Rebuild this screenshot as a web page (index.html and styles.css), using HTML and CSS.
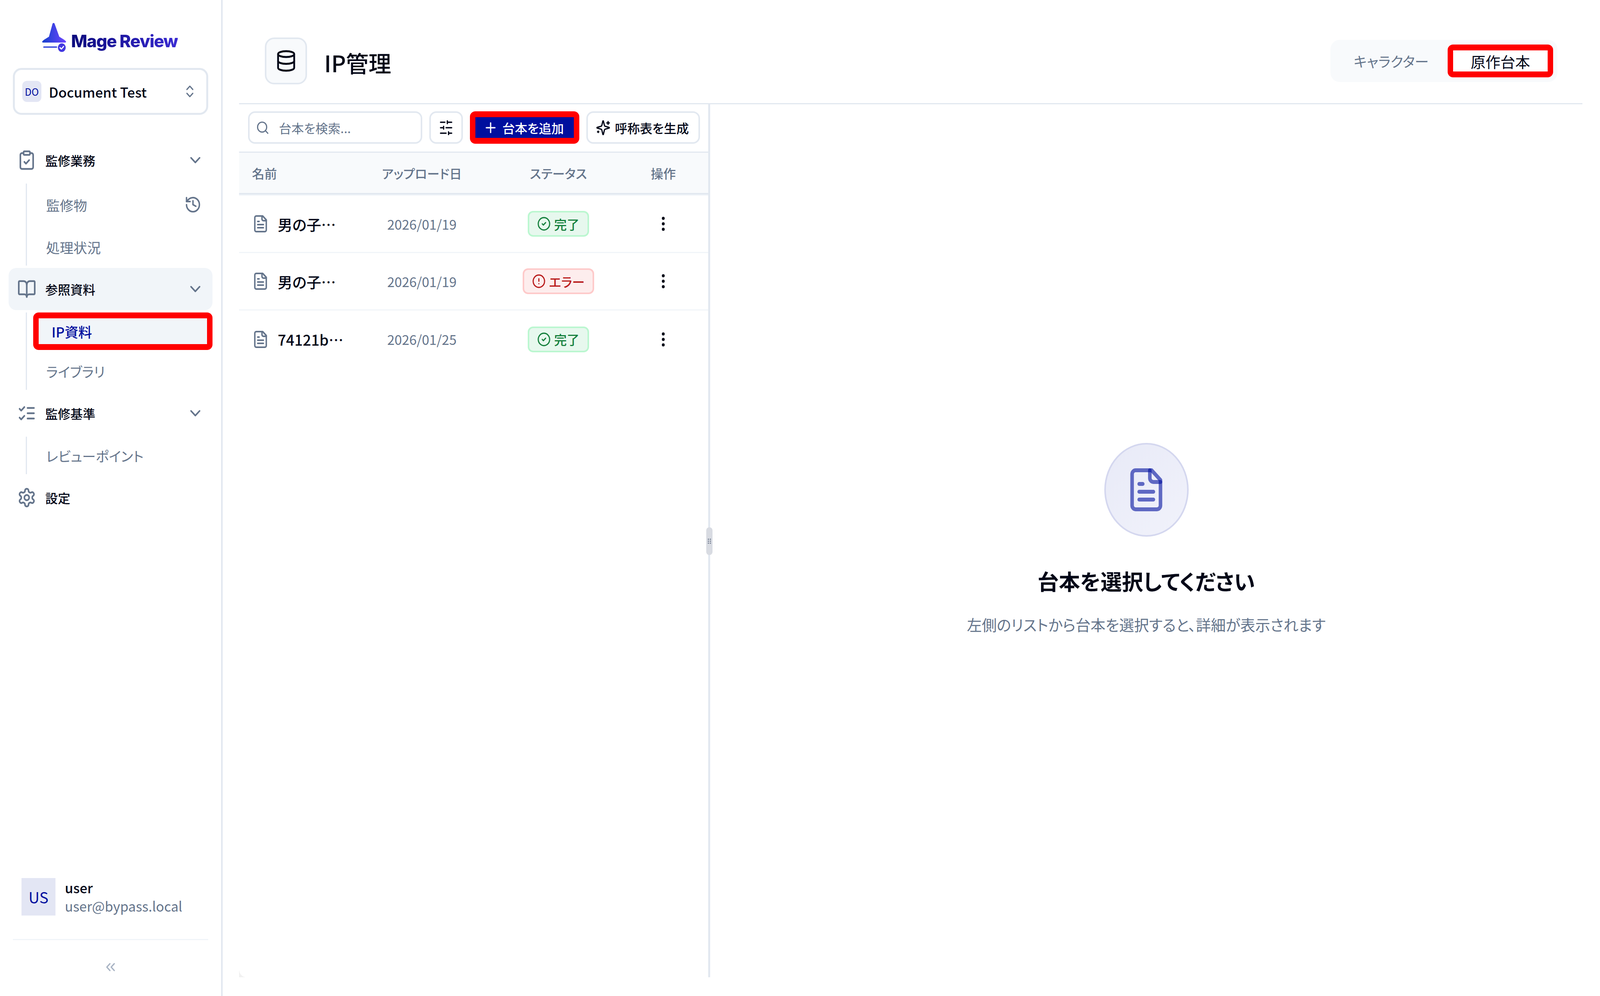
FILE: index.html
```html
<!DOCTYPE html>
<html lang="ja">
  <head>
    <meta charset="UTF-8" />
    <title>Mage Review</title>
    <link rel="stylesheet" href="styles.css">
  </head>
  <body>
    <div class="app">
      <aside class="sidebar">
        <div class="logo">
          <svg class="logo-mark" viewBox="0 0 70 80" preserveAspectRatio="none" aria-hidden="true">
            <defs>
              <linearGradient id="hat" x1="0" y1="0" x2="1" y2="0">
                <stop offset="0" stop-color="#1440cc" />
                <stop offset="1" stop-color="#6e45ff" />
              </linearGradient>
            </defs>
            <path fill="url(#hat)" d="M30 5c1-3 5-3 6 0l13 33 14 8c3 2 5 4 5 5s-1 2-3 2H4c-2 0-3-1-3-2s2-3 5-5l14-8z" />
            <rect x="4" y="63" width="39" height="3" rx="1.5" fill="#2236d8" />
            <circle cx="56" cy="66" r="11" fill="#4338e0" />
            <path d="m51 66 4 3.500 6-6.500" fill="none" stroke="#fff" stroke-width="3" stroke-linecap="round" stroke-linejoin="round" />
          </svg>
          <span class="logo-text">Mage Review</span>
        </div>

        <div class="workspace">
          <span class="workspace-avatar">DO</span>
          <span class="workspace-name">Document Test</span>
          <svg class="icon-updown" viewBox="0 0 24 24" preserveAspectRatio="none"><path d="m7 15 5 5 5-5" /><path d="m7 9 5-5 5 5" /></svg>
        </div>

        <nav class="nav">
          <div class="nav-group">
            <svg class="nav-icon" viewBox="0 0 24 24" preserveAspectRatio="none"><rect x="8" y="2" width="8" height="4" rx="1" ry="1" /><path d="M16 4h2a2 2 0 0 1 2 2v14a2 2 0 0 1-2 2H6a2 2 0 0 1-2-2V6a2 2 0 0 1 2-2h2" /><path d="m9 14 2 2 4-4" /></svg>
            <span class="nav-label">監修業務</span>
            <svg class="nav-chevron" viewBox="0 0 24 24" preserveAspectRatio="none"><path d="m6 9 6 6 6-6" /></svg>
          </div>
          <div class="nav-sub">
            <div class="nav-item tall">
              <span>監修物</span>
              <svg class="nav-history" viewBox="0 0 24 24" preserveAspectRatio="none"><path d="M3 12a9 9 0 1 0 9-9 9.750 9.750 0 0 0-6.740 2.740L3 8" /><path d="M3 3v5h5" /><path d="M12 7v5l4 2" /></svg>
            </div>
            <div class="nav-item">処理状況</div>
          </div>

          <div class="nav-group open">
            <svg class="nav-icon" viewBox="0 0 24 24" preserveAspectRatio="none"><path d="M12 7v14" /><path d="M3 18a1 1 0 0 1-1-1V4a1 1 0 0 1 1-1h5a4 4 0 0 1 4 4 4 4 0 0 1 4-4h5a1 1 0 0 1 1 1v13a1 1 0 0 1-1 1h-6a3 3 0 0 0-3 3 3 3 0 0 0-3-3z" /></svg>
            <span class="nav-label">参照資料</span>
            <svg class="nav-chevron" viewBox="0 0 24 24" preserveAspectRatio="none"><path d="m6 9 6 6 6-6" /></svg>
          </div>
          <div class="nav-sub">
            <div class="nav-item active">IP資料</div>
            <div class="nav-item">ライブラリ</div>
          </div>

          <div class="nav-group">
            <svg class="nav-icon" viewBox="0 0 24 24" preserveAspectRatio="none"><path d="m3 17 2 2 4-4" /><path d="m3 7 2 2 4-4" /><path d="M13 6h8" /><path d="M13 12h8" /><path d="M13 18h8" /></svg>
            <span class="nav-label">監修基準</span>
            <svg class="nav-chevron" viewBox="0 0 24 24" preserveAspectRatio="none"><path d="m6 9 6 6 6-6" /></svg>
          </div>
          <div class="nav-sub">
            <div class="nav-item">レビューポイント</div>
          </div>

          <div class="nav-group">
            <svg class="nav-icon" viewBox="0 0 24 24" preserveAspectRatio="none"><path d="M12.220 2h-.44a2 2 0 0 0-2 2v.18a2 2 0 0 1-1 1.730l-.43.25a2 2 0 0 1-2 0l-.15-.08a2 2 0 0 0-2.730.73l-.22.38a2 2 0 0 0 .73 2.730l.15.1a2 2 0 0 1 1 1.720v.51a2 2 0 0 1-1 1.740l-.15.09a2 2 0 0 0-.73 2.730l.22.38a2 2 0 0 0 2.730.73l.15-.08a2 2 0 0 1 2 0l.43.25a2 2 0 0 1 1 1.730V20a2 2 0 0 0 2 2h.44a2 2 0 0 0 2-2v-.18a2 2 0 0 1 1-1.730l.43-.25a2 2 0 0 1 2 0l.15.08a2 2 0 0 0 2.730-.73l.22-.39a2 2 0 0 0-.73-2.730l-.15-.08a2 2 0 0 1-1-1.740v-.5a2 2 0 0 1 1-1.740l.15-.09a2 2 0 0 0 .73-2.730l-.22-.38a2 2 0 0 0-2.730-.73l-.15.08a2 2 0 0 1-2 0l-.43-.25a2 2 0 0 1-1-1.730V4a2 2 0 0 0-2-2z" /><circle cx="12" cy="12" r="3" /></svg>
            <span class="nav-label">設定</span>
          </div>
        </nav>

        <div class="user">
          <span class="user-avatar">US</span>
          <div class="user-text">
            <div class="user-name">user</div>
            <div class="user-mail">user@bypass.local</div>
          </div>
        </div>
        <div class="collapse">
          <svg class="icon-collapse" viewBox="0 0 24 24" preserveAspectRatio="none"><path d="m11 17-5-5 5-5" /><path d="m18 17-5-5 5-5" /></svg>
        </div>
      </aside>

      <main class="main">
        <header class="page-head">
          <div class="page-icon">
            <svg viewBox="0 0 24 24" preserveAspectRatio="none"><ellipse cx="12" cy="5" rx="9" ry="3" /><path d="M3 5V19A9 3 0 0 0 21 19V5" /><path d="M3 12A9 3 0 0 0 21 12" /></svg>
          </div>
          <h1 class="page-title">IP管理</h1>
          <div class="tabs">
            <div class="tab">キャラクター</div>
            <div class="tab current">原作台本</div>
          </div>
        </header>

        <div class="panels">
          <section class="list-panel">
            <div class="toolbar">
              <div class="search">
                <svg viewBox="0 0 24 24" preserveAspectRatio="none"><path d="m21 21-4.300-4.300" /><circle cx="11" cy="11" r="8" /></svg>
                <span>台本を検索...</span>
              </div>
              <button class="btn btn-filter">
                <svg viewBox="0 0 24 24" preserveAspectRatio="none"><path d="M21 4h-7" /><path d="M10 4H3" /><path d="M21 12h-9" /><path d="M8 12H3" /><path d="M21 20h-5" /><path d="M12 20H3" /><path d="M14 2v4" /><path d="M8 10v4" /><path d="M16 18v4" /></svg>
              </button>
              <button class="btn btn-add">
                <svg viewBox="0 0 24 24" preserveAspectRatio="none"><path d="M5 12h14" /><path d="M12 5v14" /></svg>
                <span>台本を追加</span>
              </button>
              <button class="btn btn-generate">
                <svg viewBox="0 0 24 24" preserveAspectRatio="none"><path d="M9.937 15.500A2 2 0 0 0 8.500 14.063l-6.135-1.582a.5.5 0 0 1 0-.962L8.500 9.936A2 2 0 0 0 9.937 8.500l1.582-6.135a.5.5 0 0 1 .963 0L14.063 8.500A2 2 0 0 0 15.500 9.937l6.135 1.581a.5.5 0 0 1 0 .964L15.500 14.063a2 2 0 0 0-1.437 1.437l-1.582 6.135a.5.5 0 0 1-.963 0z" /><path d="M20 3v4" /><path d="M22 5h-4" /><path d="M4 17v2" /><path d="M5 18H3" /></svg>
                <span>呼称表を生成</span>
              </button>
            </div>

            <div class="table-row table-head">
              <div class="col-name">名前</div>
              <div class="col-center">アップロード日</div>
              <div class="col-center">ステータス</div>
              <div class="col-center">操作</div>
            </div>

            <div class="table-row">
              <div class="col-name">
                <svg class="doc-icon" viewBox="0 0 24 24" preserveAspectRatio="none"><path d="M15 2H6a2 2 0 0 0-2 2v16a2 2 0 0 0 2 2h12a2 2 0 0 0 2-2V7Z" /><path d="M14 2v4a2 2 0 0 0 2 2h4" /><path d="M10 9H8" /><path d="M16 13H8" /><path d="M16 17H8" /></svg>
                <span class="doc-name">男の子…</span>
              </div>
              <div class="col-center date">2026/01/19</div>
              <div class="col-center">
                <span class="badge done">
                  <svg viewBox="0 0 24 24" preserveAspectRatio="none"><circle cx="12" cy="12" r="10" /><path d="m9 12 2 2 4-4" /></svg>完了
                </span>
              </div>
              <div class="col-center">
                <svg class="kebab" viewBox="0 0 24 24" preserveAspectRatio="none"><circle cx="12" cy="12" r="1" /><circle cx="12" cy="5" r="1" /><circle cx="12" cy="19" r="1" /></svg>
              </div>
            </div>

            <div class="table-row">
              <div class="col-name">
                <svg class="doc-icon" viewBox="0 0 24 24" preserveAspectRatio="none"><path d="M15 2H6a2 2 0 0 0-2 2v16a2 2 0 0 0 2 2h12a2 2 0 0 0 2-2V7Z" /><path d="M14 2v4a2 2 0 0 0 2 2h4" /><path d="M10 9H8" /><path d="M16 13H8" /><path d="M16 17H8" /></svg>
                <span class="doc-name">男の子…</span>
              </div>
              <div class="col-center date">2026/01/19</div>
              <div class="col-center">
                <span class="badge failed">
                  <svg viewBox="0 0 24 24" preserveAspectRatio="none"><circle cx="12" cy="12" r="10" /><path d="M12 8v4" /><path d="M12 16h.01" /></svg>エラー
                </span>
              </div>
              <div class="col-center">
                <svg class="kebab" viewBox="0 0 24 24" preserveAspectRatio="none"><circle cx="12" cy="12" r="1" /><circle cx="12" cy="5" r="1" /><circle cx="12" cy="19" r="1" /></svg>
              </div>
            </div>

            <div class="table-row last">
              <div class="col-name">
                <svg class="doc-icon" viewBox="0 0 24 24" preserveAspectRatio="none"><path d="M15 2H6a2 2 0 0 0-2 2v16a2 2 0 0 0 2 2h12a2 2 0 0 0 2-2V7Z" /><path d="M14 2v4a2 2 0 0 0 2 2h4" /><path d="M10 9H8" /><path d="M16 13H8" /><path d="M16 17H8" /></svg>
                <span class="doc-name">74121b…</span>
              </div>
              <div class="col-center date">2026/01/25</div>
              <div class="col-center">
                <span class="badge done">
                  <svg viewBox="0 0 24 24" preserveAspectRatio="none"><circle cx="12" cy="12" r="10" /><path d="m9 12 2 2 4-4" /></svg>完了
                </span>
              </div>
              <div class="col-center">
                <svg class="kebab" viewBox="0 0 24 24" preserveAspectRatio="none"><circle cx="12" cy="12" r="1" /><circle cx="12" cy="5" r="1" /><circle cx="12" cy="19" r="1" /></svg>
              </div>
            </div>
          </section>

          <div class="splitter">
            <div class="splitter-handle">
              <i></i><i></i><i></i><i></i><i></i><i></i>
            </div>
          </div>

          <section class="detail">
            <div class="empty-circle">
              <svg viewBox="0 0 24 24" preserveAspectRatio="none"><path d="M15 2H6a2 2 0 0 0-2 2v16a2 2 0 0 0 2 2h12a2 2 0 0 0 2-2V7Z" /><path d="M14 2v4a2 2 0 0 0 2 2h4" /><path d="M10 9H8" /><path d="M16 13H8" /><path d="M16 17H8" /></svg>
            </div>
            <h2 class="empty-title">台本を選択してください</h2>
            <p class="empty-text">左側のリストから台本を選択すると、詳細が表示されます</p>
          </section>
        </div>
      </main>
    </div>
  </body>
</html>
```

FILE: styles.css
```css
* {
  box-sizing: border-box;
}

html,
body {
  margin: 0;
  height: 100%;
  background: #fff;
  font-family: "Noto Sans CJK JP", "Noto Sans", sans-serif;
  font-feature-settings: "palt";
  color: #020617;
}

svg {
  fill: none;
  stroke: currentColor;
  stroke-width: 2;
  stroke-linecap: round;
  stroke-linejoin: round;
  flex: none;
  display: block;
}

.app {
  display: flex;
  height: 100vh;
}

/* sidebar */

.sidebar {
  width: 570px;
  flex: none;
  border-right: 4px solid #e2e8f0;
  display: flex;
  flex-direction: column;
}

.logo {
  display: flex;
  align-items: flex-start;
  height: 174px;
  padding: 56px 0 0 107px;
}

.logo-mark {
  width: 64px;
  height: 80px;
  stroke: none;
}

.logo-text {
  margin: 22px 0 0 11px;
  font-family: "Inter", sans-serif;
  font-size: 44px;
  line-height: 54px;
  font-weight: 800;
  letter-spacing: -1.5px;
  background: linear-gradient(90deg, #0b0a7c, #3a2bd2);
  -webkit-background-clip: text;
  background-clip: text;
  color: transparent;
}

.workspace {
  margin-left: 33px;
  width: 500px;
  height: 120px;
  border: 5px solid #e2e8f0;
  border-radius: 22px;
  display: flex;
  align-items: center;
  padding: 0 24px 0 19px;
}

.workspace-avatar {
  width: 49px;
  height: 54px;
  border-radius: 12px;
  background: #e3e6f4;
  color: #000f9e;
  font-size: 25px;
  display: grid;
  place-items: center;
}

.workspace-name {
  flex: 1;
  margin-left: 19px;
  font-size: 35px;
  font-weight: 500;
}

.icon-updown {
  width: 36px;
  height: 40px;
  color: #64748b;
}

.nav {
  margin-top: 62px;
}

.nav-group {
  margin-left: 22px;
  width: 522px;
  height: 108px;
  padding: 0 22px;
  border-radius: 20px;
  display: flex;
  align-items: center;
}

.nav-group.open {
  background: #f1f5f9;
}

.nav-icon {
  width: 49px;
  height: 54px;
  color: #64748b;
}

.nav-label {
  flex: 1;
  margin-left: 23px;
  font-size: 32px;
  font-weight: 500;
}

.nav-chevron {
  width: 44px;
  height: 48px;
  color: #64748b;
}

.nav-sub {
  margin: 6px 0 6px 66px;
  width: 478px;
  border-left: 3px solid #e2e8f0;
  padding-left: 16px;
  display: flex;
  flex-direction: column;
  gap: 6px;
}

.nav-item {
  height: 96px;
  padding: 0 28px 0 33px;
  display: flex;
  align-items: center;
  justify-content: space-between;
  font-size: 35px;
  color: #64748b;
}

.nav-item.tall {
  height: 108px;
}

.nav-history {
  width: 44px;
  height: 48px;
}

.nav-item.active {
  border: solid #f00;
  border-width: 15px 14px;
  border-radius: 14px;
  background: #f1f5f9;
  color: #000f9e;
  font-weight: 500;
  padding-left: 33px;
}

.user {
  margin: auto 0 0 55px;
  display: flex;
  align-items: center;
}

.user-avatar {
  width: 87px;
  height: 96px;
  background: #e3e6f4;
  color: #000f9e;
  font-size: 39px;
  display: grid;
  place-items: center;
}

.user-text {
  margin-left: 24px;
}

.user-name {
  font-size: 34.500px;
  line-height: 46px;
  font-weight: 500;
}

.user-mail {
  font-size: 34.500px;
  line-height: 48px;
  color: #64748b;
}

.collapse {
  margin: 60px 33px 0;
  height: 146px;
  border-top: 3px solid #f1f5f9;
  display: flex;
  justify-content: center;
  padding-top: 48px;
}

.icon-collapse {
  width: 38px;
  height: 42px;
  color: #a9b4c4;
}

/* main area */

.main {
  flex: 1;
  padding: 0 45px 48px 42px;
  display: flex;
  flex-direction: column;
}

.page-head {
  height: 267px;
  flex: none;
  border-bottom: 3px solid #e2e8f0;
  display: flex;
  align-items: flex-start;
  padding: 96px 64px 0 66px;
}

.page-icon {
  width: 108px;
  height: 120px;
  background: #f8fafc;
  border: 4px solid #e2e8f0;
  border-radius: 24px;
  display: grid;
  place-items: center;
}

.page-icon svg {
  width: 55px;
  height: 60px;
}

.page-title {
  flex: 1;
  margin: 0 0 0 44px;
  font-size: 58px;
  line-height: 128px;
  font-weight: 500;
}

.tabs {
  margin-top: 6px;
  height: 108px;
  padding: 12px 11px;
  border-radius: 24px;
  background: #f8fafc;
  display: flex;
}

.tab {
  width: 289px;
  display: grid;
  place-items: center;
  font-size: 36px;
  color: #64748b;
}

.tab.current {
  width: 270px;
  height: 84px;
  border: solid #f00;
  border-width: 15px 14px;
  border-radius: 14px;
  background: #fff;
  color: #020617;
  font-size: 38px;
}

.panels {
  flex: 1;
  display: flex;
  min-height: 0;
}

.list-panel {
  width: 1201px;
  flex: none;
  position: relative;
}

/* little grey corner left of the list bottom */
.list-panel::after {
  content: "";
  position: absolute;
  left: 0;
  bottom: 0;
  width: 18px;
  height: 20px;
  background: radial-gradient(18px 20px at 100% 0, transparent 98%, #f1f1f1 100%);
}

.toolbar {
  height: 124px;
  border-bottom: 3px solid #e2e8f0;
  padding: 18px 0 0 23px;
  display: flex;
  gap: 18px;
}

.search {
  width: 446px;
  height: 83px;
  border: 4px solid #e2e8f0;
  border-radius: 18px;
  padding-left: 16px;
  display: flex;
  align-items: center;
  color: #64748b;
  font-size: 32px;
}

.search svg {
  width: 35px;
  height: 38px;
  margin-right: 24px;
}

.btn {
  height: 83px;
  padding: 0;
  border: 4px solid #e2e8f0;
  border-radius: 18px;
  background: #fff;
  font: inherit;
  font-size: 32px;
  color: #020617;
  display: flex;
  align-items: center;
}

.btn svg {
  width: 38px;
  height: 42px;
}

.btn-filter {
  width: 86px;
  justify-content: center;
}

.btn-add {
  width: 280px;
  border: solid #f00;
  border-width: 15px 14px;
  border-radius: 14px;
  background: #000f9e;
  color: #fff;
  font-weight: 500;
  padding-left: 20px;
  gap: 11px;
}

.btn-generate {
  width: 291px;
  padding-left: 20px;
  gap: 11px;
  font-weight: 500;
}

.table-row {
  display: grid;
  grid-template-columns: 326px 284px 415px 122px;
  align-items: center;
  height: 147px;
  border-bottom: 3px solid #f1f5f9;
}

.table-head {
  height: 107px;
  margin-bottom: 3px;
  background: #f8fafc;
  border-bottom: 4px solid #e2e8f0;
  box-shadow: 0 3px 0 #f1f5f9;
  font-size: 32px;
  font-weight: 500;
  color: #64748b;
}

.table-row.last {
  border-bottom: none;
}

.col-name {
  padding-left: 33px;
  display: flex;
  align-items: center;
}

.col-center {
  display: flex;
  justify-content: center;
}

.doc-icon {
  width: 44px;
  height: 48px;
  color: #64748b;
}

.doc-name {
  margin-left: 22px;
  font-size: 37.500px;
  font-weight: 500;
}

.date {
  font-size: 34px;
  color: #64748b;
}

.badge {
  height: 66px;
  padding: 0 20px;
  border-radius: 14px;
  border: 4px solid;
  display: flex;
  align-items: center;
  gap: 8px;
  font-size: 32.500px;
  font-weight: 500;
}

.badge svg {
  width: 35px;
  height: 38px;
}

.badge.done {
  background: #e7f8ee;
  border-color: #bbf7d0;
  color: #15803d;
}

.badge.failed {
  background: #fdeded;
  border-color: #fecaca;
  color: #b91c1c;
}

.kebab {
  width: 44px;
  height: 48px;
}

.splitter {
  width: 5px;
  flex: none;
  background: #e2e8f0;
  position: relative;
}

.splitter-handle {
  position: absolute;
  left: -5px;
  top: 1083px;
  width: 16px;
  height: 71px;
  border-radius: 8px;
  background: #d8dbe2;
  display: grid;
  grid-template-columns: 3px 3px;
  grid-auto-rows: 3px;
  gap: 2px;
  justify-content: center;
  align-content: center;
}

.splitter-handle i {
  border-radius: 50%;
  background: #5f6b80;
}

.detail {
  flex: 1;
  display: flex;
  flex-direction: column;
  align-items: center;
  padding-top: 867px;
}

.empty-circle {
  width: 216px;
  height: 240px;
  border-radius: 50%;
  border: 4px solid #d4d7ef;
  background: linear-gradient(135deg, #e8eaf7, #f1f2fb);
  display: grid;
  place-items: center;
}

.empty-circle svg {
  width: 109px;
  height: 120px;
  color: #000f9e;
  stroke-opacity: 0.6;
}

.empty-title {
  margin: 73px 0 0;
  font-size: 54.500px;
  line-height: 80px;
  font-weight: 700;
}

.empty-text {
  margin: 42px 0 0;
  font-size: 38.200px;
  line-height: 60px;
  color: #64748b;
}
```
